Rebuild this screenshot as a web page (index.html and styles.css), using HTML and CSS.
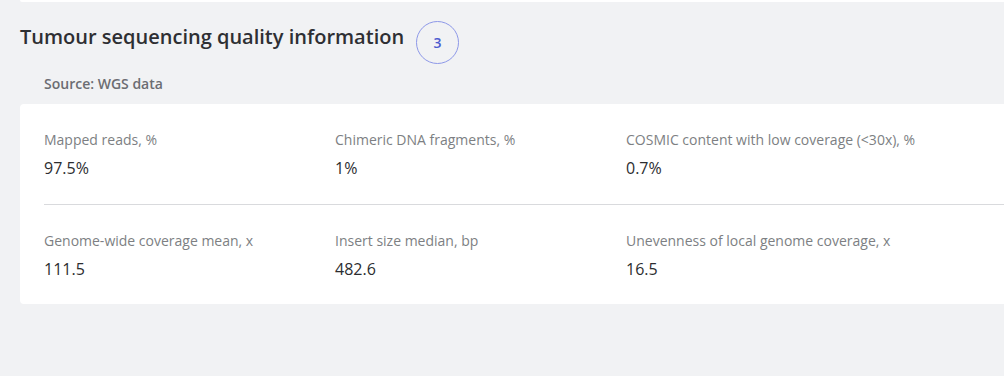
FILE: index.html
```html
<!DOCTYPE html>
<html lang="en">
  <head>
    <meta charset="UTF-8" />
    <meta name="viewport" content="width=device-width, initial-scale=1.0" />
    <title>Tumour sequencing quality</title>
    <link rel="stylesheet" href="styles.css">
  </head>
  <body>
    <div class="page">
      <div class="prev-card"></div>
      <div class="section-head">
        <h2 class="section-title">Tumour sequencing quality information</h2>
        <span class="badge">3</span>
      </div>
      <div class="source">Source: WGS data</div>
      <div class="card">
        <div class="metrics">
          <div class="metric">
            <div class="metric-label">Mapped reads, %</div>
            <div class="metric-value">97.5%</div>
          </div>
          <div class="metric">
            <div class="metric-label">Chimeric DNA fragments, %</div>
            <div class="metric-value">1%</div>
          </div>
          <div class="metric">
            <div class="metric-label">COSMIC content with low coverage (&lt;30x), %</div>
            <div class="metric-value">0.7%</div>
          </div>
        </div>
        <div class="metrics">
          <div class="metric">
            <div class="metric-label">Genome-wide coverage mean, x</div>
            <div class="metric-value">111.5</div>
          </div>
          <div class="metric">
            <div class="metric-label">Insert size median, bp</div>
            <div class="metric-value">482.6</div>
          </div>
          <div class="metric">
            <div class="metric-label">Unevenness of local genome coverage, x</div>
            <div class="metric-value">16.5</div>
          </div>
        </div>
      </div>
    </div>
  </body>
</html>
```

FILE: styles.css
```css
html,
body {
  margin: 0;
  background-color: #f1f2f4;
  font-family: 'Open Sans', sans-serif;
  overflow: hidden;
}

.page {
  padding-left: 20px;
  width: 1020px;
}

.prev-card {
  height: 2px;
  background-color: white;
  border-radius: 0 0 0 4px;
}

.section-head {
  display: flex;
  align-items: flex-start;
  margin-top: 19px;
}

.section-title {
  margin: 3px 0 0 0;
  font-size: 20px;
  line-height: 26px;
  font-weight: 600;
  color: #2e2f33;
}

.badge {
  width: 41px;
  height: 41px;
  margin-left: 12px;
  border: 1.5px solid #8d98e8;
  border-radius: 50%;
  display: flex;
  align-items: center;
  justify-content: center;
  font-size: 14px;
  font-weight: 600;
  color: #4c5bd0;
}

.source {
  padding-left: 24px;
  margin-top: 10px;
  font-size: 14px;
  line-height: 20px;
  font-weight: 600;
  color: #6b6d72;
}

.card {
  margin-top: 10px;
  background-color: white;
  border-radius: 4px;
  padding: 0 0 0 24px;
}

.metrics {
  display: flex;
  padding: 26px 0 25px;
}

.metrics + .metrics {
  border-top: 1px solid #d9dadd;
  padding-top: 26px;
  padding-bottom: 24px;
}

.metric {
  width: 291px;
}

.metric-label {
  font-size: 14px;
  line-height: 20px;
  color: #7d7f83;
}

.metric-value {
  margin-top: 7px;
  font-size: 16px;
  line-height: 22px;
  color: #2c2d30;
}
```
